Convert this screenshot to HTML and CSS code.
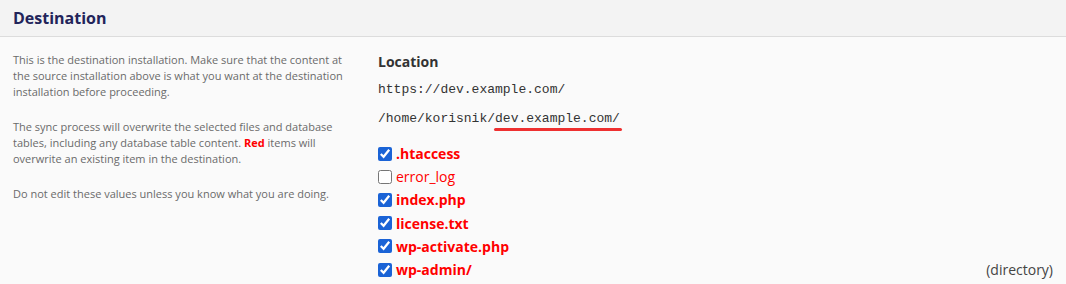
FILE: index.html
```html
<!DOCTYPE html>
<html>
<head>
<meta charset="utf-8">
<link rel="stylesheet" href="styles.css">
</head>
<body>
<div class="panel">
  <div class="panel-head">Destination</div>
  <div class="panel-body">
    <div class="info">
      <p>This is the destination installation. Make sure that the content at the source installation above is what you want at the destination installation before proceeding.</p>
      <p>The sync process will overwrite the selected files and database tables, including any database table content. <strong class="red">Red</strong> items will overwrite an existing item in the destination.</p>
      <p>Do not edit these values unless you know what you are doing.</p>
    </div>
    <div class="details">
      <div class="label">Location</div>
      <div class="mono url">https://dev.example.com/</div>
      <div class="mono path">/home/korisnik/<span class="mark">dev.example.com/</span></div>
      <ul class="files">
        <li><label><input type="checkbox" checked><span class="name bold">.htaccess</span></label></li>
        <li><label><input type="checkbox"><span class="name">error_log</span></label></li>
        <li><label><input type="checkbox" checked><span class="name bold">index.php</span></label></li>
        <li><label><input type="checkbox" checked><span class="name bold">license.txt</span></label></li>
        <li><label><input type="checkbox" checked><span class="name bold">wp-activate.php</span></label></li>
        <li><label><input type="checkbox" checked><span class="name bold">wp-admin/</span></label><span class="kind">(directory)</span></li>
      </ul>
    </div>
  </div>
</div>
</body>
</html>
```
FILE: styles.css
```css
html, body {
  margin: 0;
  padding: 0;
}
body {
  background: #fafafa;
  font-family: "Open Sans", "Liberation Sans", sans-serif;
  color: #666;
}
.panel-head {
  height: 37px;
  box-sizing: border-box;
  padding: 0 13px;
  display: flex;
  align-items: center;
  background: #f3f3f3;
  border-bottom: 1px solid #dcdcdc;
  font-size: 16px;
  font-weight: 700;
  color: #22245a;
}
.panel-body {
  display: flex;
  padding: 15px 13px 0 13px;
}
.info {
  width: 340px;
  flex: none;
  font-size: 11px;
  line-height: 16px;
  color: #6a6a6a;
}
.info p {
  margin: 0 0 19px 0;
}
.red {
  color: #ff0000;
  font-weight: 700;
}
.details {
  margin-left: 25px;
  flex: 1;
  color: #333;
}
.label {
  font-size: 14px;
  font-weight: 700;
  color: #333;
  line-height: 20px;
}
.mono {
  font-family: "Liberation Mono", "Courier New", monospace;
  font-size: 13px;
  color: #333;
  line-height: 18px;
}
.url {
  margin-top: 9px;
}
.path {
  margin-top: 11px;
}
.mark {
  position: relative;
}
.mark::after {
  content: "";
  position: absolute;
  left: -1px;
  right: -2px;
  bottom: -5px;
  height: 3px;
  border-radius: 2px;
  background: #ee3030;
}
.files {
  list-style: none;
  margin: 14px 0 0 0;
  padding: 0;
}
.files li {
  display: flex;
  align-items: center;
  height: 23.2px;
}
.files label {
  display: flex;
  align-items: center;
}
.files input {
  margin: 0 4px 0 0;
  width: 14px;
  height: 14px;
  accent-color: #1a63d6;
}
.name {
  font-size: 14px;
  color: #ff0000;
}
.name.bold {
  font-weight: 700;
}
.kind {
  margin-left: auto;
  font-size: 14px;
  color: #444;
}
```
